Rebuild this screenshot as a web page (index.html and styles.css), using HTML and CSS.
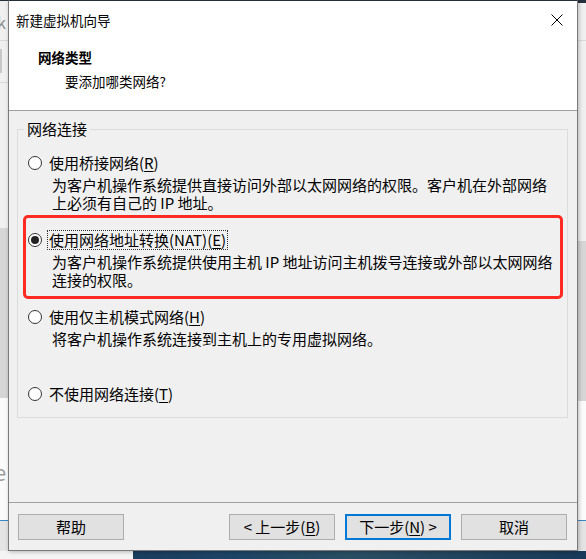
FILE: index.html
```html
<!DOCTYPE html>
<html lang="zh-CN">
<head>
    <meta charset="UTF-8">
    <title>新建虚拟机向导</title>
    <link rel="stylesheet" href="styles.css">
</head>
<body>
    <div class="desk-left">
        <div class="seg seg-top"><span class="peek-k">k</span></div>
        <div class="seg seg-tool"><span class="grip"></span></div>
        <div class="seg seg-light"></div>
        <div class="seg seg-gray"></div>
        <div class="seg seg-white"><span class="peek-e">e</span></div>
        <div class="seg seg-status"></div>
    </div>
    <div class="desk-right">
        <div class="seg seg-top"></div>
        <div class="seg seg-light"></div>
        <div class="seg seg-gray"></div>
        <div class="seg seg-white"></div>
        <div class="seg seg-status"></div>
    </div>
    <div class="desk-taskbit"></div>

    <div class="dialog">
        <div class="titlebar">
            <span class="title">新建虚拟机向导</span>
            <svg class="close" width="12" height="12" viewBox="0 0 12 12">
                <path d="M0.5 0.5 L11.5 11.5 M11.5 0.5 L0.5 11.5" stroke="#000" stroke-width="1"/>
            </svg>
        </div>
        <div class="header">
            <div class="header-title">网络类型</div>
            <div class="header-sub">要添加哪类网络?</div>
        </div>
        <div class="content">
            <fieldset class="group">
                <legend>网络连接</legend>
                <div class="option">
                    <div class="choice">
                        <span class="radio"></span>
                        <span class="label">使用桥接网络(<u>R</u>)</span>
                    </div>
                    <div class="desc">为客户机操作系统提供直接访问外部以太网网络的权限。客户机在外部网络<br>上必须有自己的 IP 地址。</div>
                </div>
                <div class="option">
                    <div class="mark"></div>
                    <div class="choice">
                        <span class="radio checked"></span>
                        <span class="label focused">使用网络地址转换(NAT)(<u>E</u>)</span>
                    </div>
                    <div class="desc">为客户机操作系统提供使用主机 IP 地址访问主机拨号连接或外部以太网网络<br>连接的权限。</div>
                </div>
                <div class="option">
                    <div class="choice">
                        <span class="radio"></span>
                        <span class="label">使用仅主机模式网络(<u>H</u>)</span>
                    </div>
                    <div class="desc">将客户机操作系统连接到主机上的专用虚拟网络。</div>
                </div>
                <div class="option">
                    <div class="choice">
                        <span class="radio"></span>
                        <span class="label">不使用网络连接(<u>T</u>)</span>
                    </div>
                </div>
            </fieldset>
        </div>
        <div class="footer">
            <button class="btn">帮助</button>
            <span class="spacer"></span>
            <button class="btn">&lt; 上一步(<u>B</u>)</button>
            <button class="btn btn-default">下一步(<u>N</u>) &gt;</button>
            <button class="btn">取消</button>
        </div>
    </div>
</body>
</html>
```

FILE: styles.css
```css
* {
    box-sizing: border-box;
}
body {
    margin: 0;
    width: 586px;
    height: 559px;
    position: relative;
    overflow: hidden;
    background: linear-gradient(90deg, #173553 0%, #1d4466 40%, #2a4f63 60%, #173a5a 100%);
    font-family: "Noto Sans CJK SC", "Noto Sans", sans-serif;
    color: #000;
}

/* windows behind the dialog */
.desk-left, .desk-right {
    position: absolute;
    top: 0;
    width: 9px;
    height: 551px;
    display: flex;
    flex-direction: column;
    border-top: 1px solid #26303b;
}
.desk-left {
    left: 0;
}
.desk-right {
    right: 0;
    border-top-width: 3px;
}
.seg {
    position: relative;
    overflow: hidden;
}
.seg-top {
    height: 40px;
    background: #f0f0f0;
    border-bottom: 1px solid #d9d9d9;
}
.desk-right .seg-top {
    height: 38px;
}
.seg-tool {
    height: 42px;
    background: #f0f0f0;
    border-bottom: 1px solid #d9d9d9;
}
.grip {
    position: absolute;
    left: 0;
    top: 8px;
    width: 2px;
    height: 24px;
    background: #c8c8c8;
}
.peek-k {
    position: absolute;
    left: -3px;
    top: 11px;
    font-size: 16px;
    line-height: 20px;
    color: #8a8a8a;
}
.peek-e {
    position: absolute;
    left: -6px;
    top: 60px;
    font-size: 22px;
    line-height: 26px;
    color: #9a9a9a;
}
.seg-light {
    height: 145px;
    background: #f0f0f0;
}
.desk-right .seg-light {
    height: 200px;
}
.seg-gray {
    height: 170px;
    background: #d6d6d6;
}
.desk-right .seg-gray {
    height: 160px;
}
.seg-white {
    flex: 1;
    background: #fbfbfb;
    border-bottom: 1px solid #3a86c8;
}
.seg-status {
    height: 30px;
    background: #e4e4e4;
}
.desk-taskbit {
    position: absolute;
    left: 0;
    bottom: 0;
    width: 133px;
    height: 8px;
    background: #f4f4f4;
}

/* the wizard dialog */
.dialog {
    position: absolute;
    left: 8px;
    top: 0;
    width: 570px;
    height: 551px;
    display: flex;
    flex-direction: column;
    background: #f0f0f0;
    border: 1px solid #7a7a7a;
    border-top-color: #26303b;
    box-shadow: 1px 1px 4px rgba(0, 0, 0, 0.25);
}
.titlebar {
    height: 37px;
    background: #fff;
    display: flex;
    align-items: center;
    padding-left: 7px;
    padding-right: 14px;
}
.title {
    font-size: 13.5px;
    line-height: 18px;
    flex: 1;
}
.close {
    display: block;
}
.header {
    height: 73px;
    background: #fff;
    border-bottom: 1px solid #a0a0a0;
    padding-top: 10px;
}
.header-title {
    font-size: 13.5px;
    font-weight: bold;
    line-height: 18px;
    padding-left: 29px;
}
.header-sub {
    font-size: 13.5px;
    line-height: 18px;
    margin-top: 6px;
    padding-left: 56px;
}
.content {
    flex: 1;
    padding: 9px 9px 0 8px;
}
.group {
    margin: 0;
    border: 1px solid #dcdcdc;
    padding: 15px 10px 13px 10px;
    min-width: 0;
}
.group legend {
    font-size: 15px;
    line-height: 18px;
    padding: 0 3px;
    margin-left: -4px;
}
.option {
    position: relative;
    margin-top: 18px;
}
.option:first-of-type {
    margin-top: 0;
}
.choice {
    display: flex;
    align-items: center;
    height: 20px;
}
.radio {
    width: 14px;
    height: 14px;
    border: 1px solid #333;
    border-radius: 50%;
    background: #fff;
    position: relative;
    margin-right: 5px;
}
.radio.checked::after {
    content: "";
    position: absolute;
    left: 2px;
    top: 2px;
    width: 8px;
    height: 8px;
    border-radius: 50%;
    background: #222;
}
.label {
    font-size: 15px;
    line-height: 18px;
    padding: 0 1px;
    border: 1px solid transparent;
    white-space: nowrap;
}
.label.focused {
    border: 1px dotted #333;
}
u {
    text-decoration-thickness: 1px;
    text-underline-offset: 2px;
}
.desc {
    font-size: 15px;
    line-height: 18px;
    margin-top: 3px;
    min-height: 36px;
    padding-left: 24px;
    white-space: nowrap;
}
/* red highlight drawn over the NAT option */
.mark {
    position: absolute;
    left: -5px;
    right: -6px;
    top: -15px;
    height: 84px;
    border: 3px solid #ff2a22;
    border-radius: 5px;
    pointer-events: none;
}
.footer {
    height: 48px;
    border-top: 1px solid #a0a0a0;
    display: flex;
    align-items: flex-start;
    gap: 10px;
    padding: 11px 10px 0 9px;
}
.spacer {
    flex: 1;
}
.btn {
    width: 106px;
    height: 26px;
    margin: 0;
    padding: 0;
    font-family: inherit;
    font-size: 15px;
    line-height: 18px;
    color: #000;
    background: #e1e1e1;
    border: 1px solid #adadad;
}
.btn-default {
    border: 2px solid #0078d7;
}
```
